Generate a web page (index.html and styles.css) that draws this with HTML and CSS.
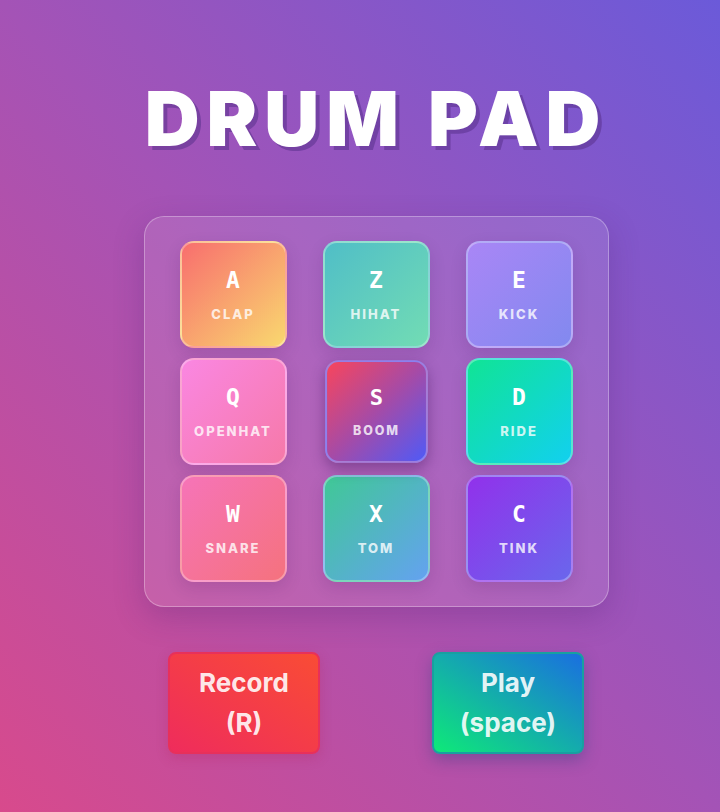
FILE: index.html
```html
<!DOCTYPE html>
<html lang="en">
<head>
  <meta charset="UTF-8">
  <meta name="viewport" content="width=device-width, initial-scale=1.0">
  <title>Drum Pad</title>
  <link rel="stylesheet" href="styles.css">
</head>
<body>
  <h1 class="title">DRUM PAD</h1>

  <!-- 3x3 pads -->
  <section class="pad-board">
    <div class="pad pad-clap"><span class="key">A</span><span class="sound">CLAP</span></div>
    <div class="pad pad-hihat"><span class="key">Z</span><span class="sound">HIHAT</span></div>
    <div class="pad pad-kick"><span class="key">E</span><span class="sound">KICK</span></div>
    <div class="pad pad-openhat"><span class="key">Q</span><span class="sound">OPENHAT</span></div>
    <div class="pad pad-boom playing"><span class="key">S</span><span class="sound">BOOM</span></div>
    <div class="pad pad-ride"><span class="key">D</span><span class="sound">RIDE</span></div>
    <div class="pad pad-snare"><span class="key">W</span><span class="sound">SNARE</span></div>
    <div class="pad pad-tom"><span class="key">X</span><span class="sound">TOM</span></div>
    <div class="pad pad-tink"><span class="key">C</span><span class="sound">TINK</span></div>
  </section>

  <div class="controls">
    <button class="ctrl-btn record">Record<br>(R)</button>
    <button class="ctrl-btn play">Play<br>(space)</button>
  </div>
</body>
</html>
```

FILE: styles.css
```css
body {
  margin: 0;
  padding-left: 32px;
  min-height: 812px;
  font-family: Inter, "Open Sans", sans-serif;
  background: linear-gradient(to top right, #d84a8c 0%, #a453b6 50%, #6b5ad9 100%);
  display: flex;
  flex-direction: column;
  align-items: center;
  color: #fff;
}

.title {
  margin: 70px 0 50px;
  font-size: 76px;
  font-weight: 900;
  letter-spacing: 7px;
  line-height: 96px;
  text-shadow: 4px 4px 0 rgba(90, 50, 140, 0.55);
}

.pad-board {
  display: grid;
  grid-template-columns: repeat(3, 107px);
  grid-auto-rows: 107px;
  column-gap: 36px;
  row-gap: 10px;
  padding: 24px 35px;
  border: 1px solid rgba(255, 255, 255, 0.3);
  border-radius: 20px;
  background: rgba(255, 255, 255, 0.1);
  box-shadow: 0 10px 30px rgba(70, 30, 110, 0.25);
}

.pad {
  box-sizing: border-box;
  border: 2px solid rgba(255, 255, 255, 0.3);
  border-radius: 14px;
  display: flex;
  flex-direction: column;
  align-items: center;
  justify-content: center;
  gap: 14px;
  box-shadow: 0 6px 16px rgba(60, 20, 90, 0.15);
}

.pad .key {
  font-family: "DejaVu Sans Mono", monospace;
  font-size: 23px;
  font-weight: bold;
  line-height: 24px;
}

.pad .sound {
  font-size: 13px;
  font-weight: 800;
  letter-spacing: 2px;
  color: rgba(255, 255, 255, 0.8);
  line-height: 16px;
}

.pad-clap { background: linear-gradient(135deg, #f86e6e, #f9d86f); }
.pad-hihat { background: linear-gradient(135deg, #50bec7, #72dcb4); }
.pad-kick { background: linear-gradient(135deg, #a986f6, #8289ef); }
.pad-openhat { background: linear-gradient(135deg, #fa87e2, #f679a8); }
.pad-boom { background: linear-gradient(135deg, #f8455c, #a64ba6 50%, #4f5af7); }
.pad-ride { background: linear-gradient(135deg, #10e495, #12d0ef); }
.pad-snare { background: linear-gradient(135deg, #f674b8, #f5727e); }
.pad-tom { background: linear-gradient(135deg, #40c896, #64a2f0); }
.pad-tink { background: linear-gradient(135deg, #9131eb, #6a66ec); }

.pad.playing {
  transform: scale(0.96);
  border-color: rgba(150, 140, 240, 0.8);
  box-shadow: 0 6px 14px rgba(60, 20, 90, 0.4);
}

.controls {
  display: flex;
  gap: 112px;
  margin-top: 45px;
}

.ctrl-btn {
  width: 152px;
  height: 102px;
  border-radius: 8px;
  font-family: Inter, "Open Sans", sans-serif;
  font-size: 26px;
  font-weight: 700;
  line-height: 40px;
  color: rgba(255, 255, 255, 0.9);
  cursor: pointer;
}

.record {
  background: linear-gradient(to top right, #ef2c5c, #f94c35);
  border: 2px solid #e8305a;
  box-shadow: 0 4px 12px rgba(180, 30, 80, 0.25);
}

.play {
  background: linear-gradient(to top right, #0ee978, #1a6fe0);
  border: 2px solid #18a0a0;
  box-shadow: 0 6px 16px rgba(30, 60, 120, 0.35);
}
```
